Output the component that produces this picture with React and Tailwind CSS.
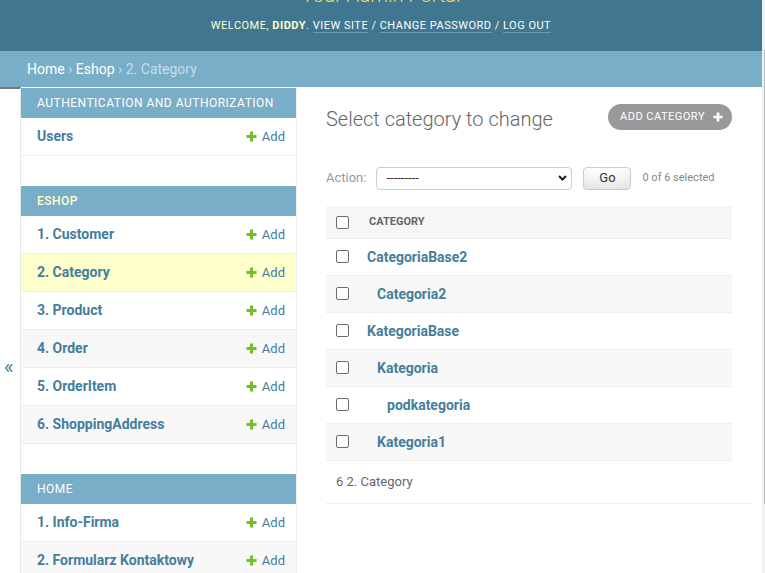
import React from "react";

const PlusIcon = ({ color = "#70bf2b", size = 11 }) => (
  <svg width={size} height={size} viewBox="0 0 11 11" className="shrink-0">
    <path d="M4 0.5h3v3.5h3.5v3H7v3.5H4V7H0.5V4H4z" fill={color} />
  </svg>
);

const modules = [
  { name: "Authentication and Authorization", current: false, models: ["Users"] },
  {
    name: "Eshop",
    current: true,
    models: ["1. Customer", "2. Category", "3. Product", "4. Order", "5. OrderItem", "6. ShoppingAddress"],
  },
  { name: "Home", current: false, models: ["1. Info-Firma", "2. Formularz Kontaktowy", "3. Galeria"] },
];

const rows = [
  { t: "CategoriaBase2", pad: "pl-0" },
  { t: "Categoria2", pad: "pl-[10px]" },
  { t: "KategoriaBase", pad: "pl-0" },
  { t: "Kategoria", pad: "pl-[10px]" },
  { t: "podkategoria", pad: "pl-[20px]" },
  { t: "Kategoria1", pad: "pl-[10px]" },
];

const Check = () => (
  <input
    type="checkbox"
    className="appearance-none m-0 w-[13px] h-[13px] shrink-0 border border-[#6b6b6b] rounded-[2px] bg-white"
  />
);

function Sidebar() {
  return (
    <div className="w-[276px] shrink-0 border-r border-[#eee] pt-[1px]">
      {modules.map((m) => (
        <div key={m.name} className="mb-[30px]">
          <div
            className={`h-[30px] flex items-center pl-[16px] bg-[#79aec8] text-[12px] tracking-[0.5px] uppercase ${
              m.current ? "text-[#ffc] font-medium" : "text-white"
            }`}
          >
            {m.name}
          </div>
          {m.models.map((name, i) => {
            const cur = m.current && name === "2. Category";
            const bg = cur ? "bg-[#ffc]" : i % 2 === 1 ? "bg-[#f8f8f8]" : "bg-white";
            return (
              <div
                key={name}
                className={`h-[38px] flex items-center justify-between pl-[16px] pr-[11px] border-b border-[#eee] ${bg}`}
              >
                <span className="text-[14px] font-bold text-[#447e9b]">{name}</span>
                <span className="flex items-center gap-[5px] text-[13px] text-[#447e9b]">
                  <PlusIcon />
                  Add
                </span>
              </div>
            );
          })}
        </div>
      ))}
    </div>
  );
}

function Content() {
  return (
    <div className="flex-1 min-w-0 pl-[29px] pr-[30px] pt-[20px]">
      <div className="flex justify-between items-start">
        <h1 className="text-[20px] leading-[24px] font-light text-[#666]">Select category to change</h1>
        <div className="mt-[-3px] h-[26px] rounded-full bg-[#999] flex items-center pl-[12px] pr-[9px] gap-[8px] text-[11px] tracking-[0.5px] uppercase text-white">
          Add category
          <PlusIcon color="#fff" size={10} />
        </div>
      </div>

      <div className="mt-[35px] h-[24px] flex items-center">
        <span className="text-[13px] text-[#999]">Action:</span>
        <div className="ml-[10px] w-[196px] h-[23px] border border-[#ccc] rounded-[4px] bg-white flex items-center justify-between pl-[9px] pr-[4px]">
          <span className="text-[13px] text-[#333]">---------</span>
          <svg width="9" height="6" viewBox="0 0 9 6">
            <path d="M1 1l3.5 3.5L8 1" stroke="#222" strokeWidth="2" fill="none" />
          </svg>
        </div>
        <div className="ml-[11px] w-[48px] h-[23px] border border-[#ccc] rounded-[4px] bg-white shadow-[inset_0_-15px_20px_-10px_rgba(0,0,0,0.15)] flex items-center justify-center text-[13px] text-[#333]">
          Go
        </div>
        <span className="ml-[11px] text-[11px] text-[#888]">0 of 6 selected</span>
      </div>

      <div className="mt-[16px]">
        <div className="h-[33px] bg-[#f6f6f6] border-b border-[#eee] flex items-center pl-[10px]">
          <Check />
          <span className="ml-[20px] text-[11px] font-bold uppercase text-[#666]">Category</span>
        </div>
        {rows.map((r, i) => (
          <div
            key={r.t}
            className={`h-[37px] border-b border-[#eee] flex items-center pl-[10px] ${
              i % 2 === 1 ? "bg-[#f8f8f8]" : "bg-white"
            }`}
          >
            <span className="mb-[2px] flex">
              <Check />
            </span>
            <span className={`ml-[18px] ${r.pad} text-[14px] font-bold text-[#447e9b]`}>{r.t}</span>
          </div>
        ))}
        <div className="mr-[-20px] h-[43px] border-b border-[#eee] flex items-center pl-[10px] text-[13px] text-[#666]">
          6 2. Category
        </div>
      </div>
    </div>
  );
}

export default function App() {
  return (
    <div className="flex w-[765px] h-[573px] overflow-hidden bg-white font-[family-name:Roboto,'Liberation_Sans',sans-serif] text-[#333]">
      <div className="w-[762px] shrink-0 flex flex-col">
        <header className="h-[51px] shrink-0 overflow-hidden bg-[#417690] flex flex-col items-center">
          <div className="mt-[-17px] text-[20px] leading-[24px] font-light text-[#f5dd5d]">Your Admin Portal</div>
          <div className="mt-[11px] text-[11px] leading-[16px] tracking-[0.5px] uppercase text-[#ffc]">
            Welcome, <strong className="font-bold">diddy</strong>.{" "}
            <a className="text-white border-b border-white/25">View site</a>
            {" / "}
            <a className="text-white border-b border-white/25">Change password</a>
            {" / "}
            <a className="text-white border-b border-white/25">Log out</a>
          </div>
        </header>
        <nav className="h-[36px] shrink-0 bg-[#79aec8] flex items-center px-[27px] text-[14px] text-[#c4dce8] whitespace-pre">
          <a className="text-white">Home</a>
          {" › "}
          <a className="text-white">Eshop</a>
          {" › 2. Category"}
        </nav>
        <div className="flex flex-1 min-h-0">
          <div className="w-[21px] shrink-0 border-r border-[#e8e8e8] border-t-2 border-t-[#787878] pt-[268px] pl-[4px]">
            <span className="text-[20px] leading-[20px] text-[#447e9b]">«</span>
          </div>
          <Sidebar />
          <Content />
        </div>
      </div>
      <div className="w-[3px] shrink-0 bg-[#f1f1f1] pt-[50px]">
        <div className="ml-[2px] w-[1px] h-[454px] bg-[#bcbcbc]" />
      </div>
    </div>
  );
}
